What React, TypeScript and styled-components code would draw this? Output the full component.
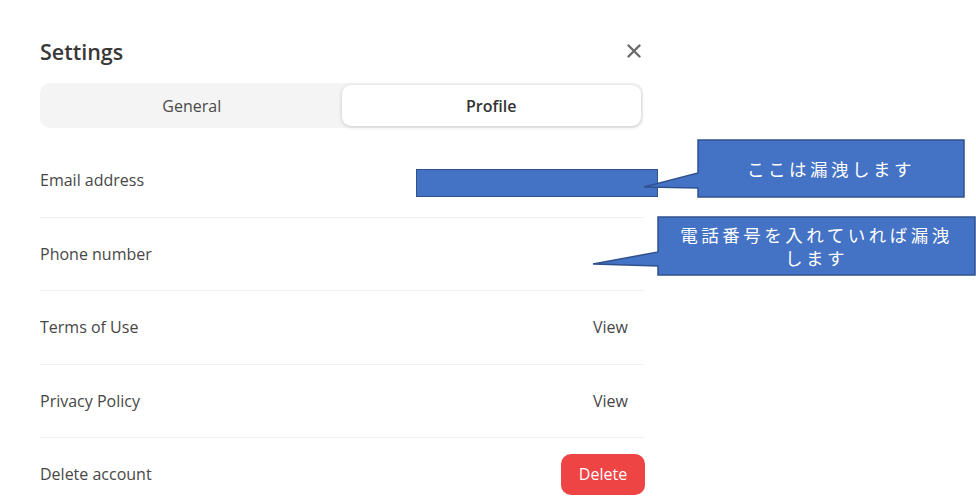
import React from "react";
import styled, { createGlobalStyle } from "styled-components";

const GlobalStyle = createGlobalStyle`
  body {
    margin: 0;
    background: #ffffff;
    font-family: "Open Sans", "Noto Sans", Arial, sans-serif;
  }
`;

const Page = styled.div`
  position: relative;
  width: 976px;
  height: 499px;
  overflow: hidden;
`;

const Dialog = styled.div`
  width: 604px;
  padding: 36px 0 0 40px;
`;

const Header = styled.div`
  display: flex;
  justify-content: space-between;
  align-items: center;
  height: 30px;
  padding-right: 2px;
`;

const Title = styled.h2`
  margin: 0;
  font-size: 21.5px;
  font-weight: 600;
  color: #383838;
`;

const CloseButton = styled.button`
  border: none;
  background: none;
  padding: 0;
  width: 16px;
  height: 16px;
  display: flex;
  align-items: center;
  justify-content: center;
  cursor: pointer;
`;

const TabBar = styled.div`
  margin-top: 17px;
  width: 603px;
  height: 45px;
  box-sizing: border-box;
  padding: 2px;
  background: #f4f4f4;
  border-radius: 10px;
  display: grid;
  grid-template-columns: 1fr 1fr;
`;

const Tab = styled.div<{ $active?: boolean }>`
  display: flex;
  align-items: center;
  justify-content: center;
  border-radius: 9px;
  font-size: 16px;
  color: ${(p) => (p.$active ? "#333" : "#4a4a4a")};
  font-weight: ${(p) => (p.$active ? 600 : 400)};
  background: ${(p) => (p.$active ? "#ffffff" : "transparent")};
  box-shadow: ${(p) =>
    p.$active ? "0 1px 4px rgba(0, 0, 0, 0.18)" : "none"};
`;

const List = styled.div`
  margin-top: 16px;
`;

const Row = styled.div`
  height: 72.5px;
  display: flex;
  align-items: center;
  justify-content: space-between;
  border-bottom: 1px solid #f1f1f1;
  &:last-child {
    border-bottom: none;
  }
`;

const Label = styled.span`
  font-size: 16px;
  color: #474747;
`;

const ViewLink = styled.span`
  font-size: 16px;
  color: #474747;
  padding-right: 16px;
`;

const DeleteButton = styled.button`
  width: 84px;
  height: 41px;
  border: none;
  border-radius: 10px;
  background: #ef4444;
  color: #fff;
  font-family: inherit;
  font-size: 16px;
  margin-right: -1px;
`;

const BlueBox = styled.div`
  position: absolute;
  left: 416px;
  top: 169px;
  width: 242px;
  height: 28px;
  box-sizing: border-box;
  background: #4472c4;
  border: 1.5px solid #2f528f;
`;

const Callout = styled.div<{ $w: number; $h: number }>`
  position: absolute;
  width: ${(p) => p.$w}px;
  height: ${(p) => p.$h}px;
  display: flex;
  flex-direction: column;
  align-items: center;
  justify-content: center;
  text-align: center;
`;

const CalloutShape = styled.svg`
  position: absolute;
  left: -80px;
  top: 0;
  overflow: visible;
`;

const CalloutLine = styled.span`
  position: relative;
  display: block;
  color: #fff;
  font-family: "Noto Sans CJK JP", "Noto Sans", sans-serif;
  font-size: 17.5px;
  letter-spacing: 3.5px;
  line-height: 23px;
  height: 23px;
`;

const rows = [
  { label: "Email address" },
  { label: "Phone number" },
  { label: "Terms of Use", action: "view" },
  { label: "Privacy Policy", action: "view" },
  { label: "Delete account", action: "delete" },
];

const CalloutBubble = ({
  left,
  top,
  w,
  h,
  tail,
  lines,
}: {
  left: number;
  top: number;
  w: number;
  h: number;
  tail: [number, number, number, number];
  lines: string[];
}) => {
  const [upper, tipX, tipY, lower] = tail;
  const d = `M80,0 H${80 + w} V${h} H80 V${lower} L${80 + tipX},${tipY} L80,${upper} Z`;
  return (
    <Callout $w={w} $h={h} style={{ left, top }}>
      <CalloutShape width={w + 80} height={h}>
        <path d={d} fill="#4472c4" stroke="#2f528f" strokeWidth="1.5" />
      </CalloutShape>
      {lines.map((line) => (
        <CalloutLine key={line}>{line}</CalloutLine>
      ))}
    </Callout>
  );
};

const App = () => {
  return (
    <Page>
      <GlobalStyle />
      <Dialog>
        <Header>
          <Title>Settings</Title>
          <CloseButton aria-label="Close">
            <svg width="14" height="14" viewBox="0 0 14 14">
              <path
                d="M1.5 1.5 L12.5 12.5 M12.5 1.5 L1.5 12.5"
                stroke="#6b6b6b"
                strokeWidth="2.4"
                strokeLinecap="round"
              />
            </svg>
          </CloseButton>
        </Header>
        <TabBar>
          <Tab>General</Tab>
          <Tab $active>Profile</Tab>
        </TabBar>
        <List>
          {rows.map((row) => (
            <Row key={row.label}>
              <Label>{row.label}</Label>
              {row.action === "view" && <ViewLink>View</ViewLink>}
              {row.action === "delete" && <DeleteButton>Delete</DeleteButton>}
            </Row>
          ))}
        </List>
      </Dialog>
      <BlueBox />
      <CalloutBubble
        left={698}
        top={140}
        w={266}
        h={57}
        tail={[33, -54, 47, 48]}
        lines={["ここは漏洩します"]}
      />
      <CalloutBubble
        left={658}
        top={217}
        w={317}
        h={58}
        tail={[35, -65, 47, 49]}
        lines={["電話番号を入れていれば漏洩", "します"]}
      />
    </Page>
  );
};

export default App;
